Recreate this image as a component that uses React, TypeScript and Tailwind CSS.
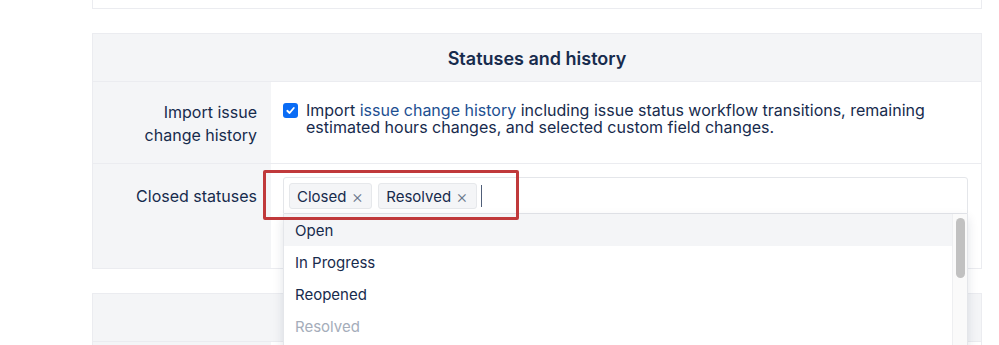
import React from "react";

export default function App() {
  const font = { fontFamily: "Inter, 'Noto Sans', 'Liberation Sans', sans-serif" };
  return (
    <div className="relative w-[999px] h-[345px] overflow-hidden bg-white text-[#172b4d]" style={font}>
      <div className="pl-[92px] pr-[17px]">
        {/* previous panel end */}
        <div className="h-[9px] border-x border-b border-[#ebecf0] bg-white" />

        {/* Statuses and history panel */}
        <div className="mt-[24px] border border-[#ebecf0]">
          <div className="h-[48px] bg-[#f4f5f7] border-b border-[#ebecf0] flex items-center justify-center pt-[2px] text-[18px] font-semibold">
            Statuses and history
          </div>
          <div className="grid grid-cols-[178px_1fr] h-[82px] border-b border-[#ebecf0]">
            <div className="bg-[#f4f5f7] text-right pr-[14px] pt-[19px] text-[16px] leading-[23px]">
              Import issue<br />change history
            </div>
            <div className="pl-[12px] pt-[19px] pr-[16px] flex items-start gap-[8px]">
              <span className="mt-[2px] w-[15px] h-[15px] shrink-0 rounded-[3px] bg-[#0a6cf5] flex items-center justify-center">
                <svg width="11" height="11" viewBox="0 0 12 12" fill="none">
                  <path d="M2.5 6.3 L5 8.7 L9.6 3.3" stroke="white" strokeWidth="2" strokeLinecap="round" strokeLinejoin="round" />
                </svg>
              </span>
              <p className="text-[16px] leading-[17px] pt-[1px]">
                Import <span className="text-[#1d4f91]">issue change history</span> including issue status workflow transitions, remaining estimated hours changes, and selected custom field changes.
              </p>
            </div>
          </div>
          <div className="grid grid-cols-[178px_1fr] h-[104px]">
            <div className="bg-[#f4f5f7] text-right pr-[14px] pt-[21px] text-[16px] leading-[23px]">
              Closed statuses
            </div>
            <div className="pl-[12px] pr-[13px] pt-[13px] relative">
              <div className="relative z-10">
                <div className="h-[37px] border border-[#e4e6ea] bg-white rounded-t-[3px] flex items-center gap-[6px] pl-[5px] pt-[1px]">
                  <span className="h-[26px] flex items-center gap-[5px] pl-[7px] pr-[8px] pt-[2px] rounded-[3px] border border-[#e6e8eb] bg-[#f4f5f7] text-[15px]">
                    Closed <span className="text-[#6b778c] text-[18px] leading-none font-light">×</span>
                  </span>
                  <span className="h-[26px] flex items-center gap-[5px] pl-[7px] pr-[8px] pt-[2px] rounded-[3px] border border-[#e6e8eb] bg-[#f4f5f7] text-[15px]">
                    Resolved <span className="text-[#6b778c] text-[18px] leading-none font-light">×</span>
                  </span>
                  <span className="w-px h-[22px] bg-[#505f79] -ml-[2px]" />
                </div>
                <div className="absolute left-0 right-0 top-full h-[200px] bg-white border-x border-[#e4e6ea] shadow-[0_4px_10px_rgba(9,30,66,0.12)] flex">
                  <div className="flex-1 text-[15px]">
                    <div className="h-[32px] flex items-center px-[11px] pt-[3px] bg-[#f4f5f7]">Open</div>
                    <div className="h-[32px] flex items-center px-[11px] pt-[3px]">In Progress</div>
                    <div className="h-[32px] flex items-center px-[11px] pt-[3px]">Reopened</div>
                    <div className="h-[32px] flex items-center px-[11px] pt-[3px] text-[#a5adba]">Resolved</div>
                  </div>
                  <div className="w-[15px] border-l border-[#eeeff1] bg-[#fafafa] pt-[4px] flex justify-center">
                    <div className="w-[9px] h-[60px] rounded-full bg-[#c1c1c1]" />
                  </div>
                </div>
              </div>
            </div>
          </div>
        </div>

        {/* next panel */}
        <div className="mt-[24px] border border-[#ebecf0]">
          <div className="h-[48px] bg-[#f4f5f7] border-b border-[#ebecf0]" />
          <div className="grid grid-cols-[178px_1fr] h-[40px]">
            <div className="bg-[#f4f5f7]" />
            <div />
          </div>
        </div>
      </div>

      {/* annotation */}
      <div className="absolute left-[263px] top-[170px] w-[256px] h-[50px] border-[3px] border-[#c0393b] rounded-[2px] z-20" />
    </div>
  );
}
